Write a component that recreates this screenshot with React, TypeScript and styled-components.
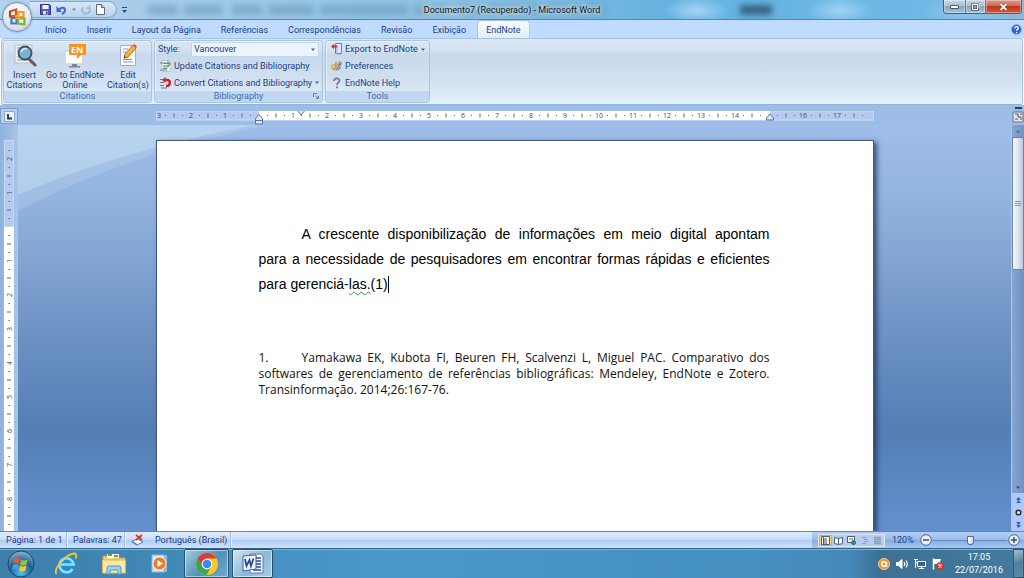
import React from "react";
import styled, { createGlobalStyle, css } from "styled-components";

const Global = createGlobalStyle`
  *, *::before, *::after { box-sizing: border-box; }
  body { margin: 0; font-family: Roboto, "Liberation Sans", sans-serif; font-size: 9px; line-height: 10px; color: #1c4184; }
  button, select, input { font: inherit; color: inherit; margin: 0; padding: 0; border: 0; background: none; }
  svg { display: block; flex: none; }
  h1, p { margin: 0; font: inherit; }
`;

const Window = styled.div`
  height: 100vh;
  display: flex;
  flex-direction: column;
  overflow: hidden;
`;

/* ---------- Title bar ---------- */

const TitleBar = styled.header`
  position: relative;
  flex: none;
  height: 20px;
  display: flex;
  align-items: flex-start;
  justify-content: space-between;
  border-bottom: 1px solid #5c86a6;
  background:
    radial-gradient(ellipse 34px 14px at 68% 55%, #a5d4f3, transparent),
    radial-gradient(ellipse 34px 14px at 82% 55%, #9fd2f3, transparent),
    radial-gradient(ellipse 40px 16px at 94% 60%, #8cc6ec, transparent),
    linear-gradient(90deg, #b5d2ee 0, #a3cbe9 18%, #8dc2e3 45%, #63b2df 66%, #6fb9e6 90%, #8fb9da 100%);
`;

const GhostTitle = styled.div`
  position: absolute;
  inset: 5px 0 4px 148px;
  display: flex;
  gap: 6px;
  filter: blur(3px);
`;

const GhostBlock = styled.span<{ $w: number; $dark?: boolean; $push?: number }>`
  width: ${(p) => p.$w}px;
  margin-left: ${(p) => p.$push ?? 0}px;
  background: ${(p) => (p.$dark ? "#2f5470" : "#6c97b8")};
  opacity: ${(p) => (p.$dark ? 0.85 : 0.6)};
`;

const QuickAccess = styled.div`
  position: relative;
  display: flex;
  align-items: center;
  height: 17px;
  width: 87px;
  margin: 1px 0 0 30px;
  padding-left: 10px;
  gap: 5px;
  border: 1px solid #86a6c9;
  border-left: 0;
  border-radius: 0 9px 9px 0;
  background: linear-gradient(#d9e8f8, #b9d2ee);
`;

const IconButton = styled.button`
  display: grid;
  place-items: center;
`;

const QuickMenu = styled(IconButton)`
  position: absolute;
  left: 92px;
  top: 5px;
`;

const WindowTitle = styled.h1`
  position: absolute;
  left: 50%;
  top: 5px;
  transform: translateX(-50%);
  white-space: nowrap;
  color: #101820;
  text-shadow: 0 0 5px #fff, 0 0 5px #d8ecfa;
`;

const WindowButtons = styled.div`
  position: relative;
  display: flex;
  height: 14px;
  margin-right: 2px;
  border: 1px solid #44627e;
  border-top: 0;
  border-radius: 0 0 4px 4px;
  overflow: hidden;
`;

const WindowButton = styled.button<{ $w: number; $close?: boolean }>`
  width: ${(p) => p.$w}px;
  display: grid;
  place-items: center;
  box-shadow: inset 0 0 0 1px rgba(255, 255, 255, 0.35);
  background: ${(p) =>
    p.$close
      ? "linear-gradient(#dd9a8c 0, #cf6a55 45%, #bd3621 50%, #d4583a 100%)"
      : "linear-gradient(#c3d8e8 0, #a9c2d6 45%, #87a5be 50%, #a6c6de 100%)"};
  & + & { border-left: 1px solid #5c7890; }
`;

const OfficeButton = styled.button`
  position: absolute;
  z-index: 2;
  left: 2px;
  top: 2px;
  width: 30px;
  height: 30px;
  border-radius: 50%;
  display: grid;
  place-items: center;
  border: 1px solid #7e94b0;
  background: radial-gradient(circle at 50% 30%, #fdfefe 0, #e3e9f1 55%, #b9c8da 100%);
  box-shadow: 0 0 2px #6684a8;
`;

/* ---------- Ribbon ---------- */

const TabStrip = styled.nav`
  flex: none;
  height: 18px;
  padding: 1px 2px 0 37px;
  display: flex;
  gap: 4px;
  background: #bfdbff;
`;

const Tab = styled.button<{ $active?: boolean }>`
  padding: 0 8px;
  border-radius: 3px 3px 0 0;
  white-space: nowrap;
  ${(p) =>
    p.$active &&
    css`
      position: relative;
      background: linear-gradient(#f7fbff, #e3edf8);
      box-shadow: 0 0 0 1px #9dbfe8;
      clip-path: inset(-1px -1px 0 -1px);
    `}
`;

const HelpButton = styled(IconButton)`
  margin-left: auto;
`;

const Ribbon = styled.section`
  flex: none;
  display: flex;
  gap: 2px;
  padding: 1px;
  height: 67px;
  margin: 0 1px;
  border: 1px solid #a5c3e8;
  border-bottom-color: #8eb4d8;
  border-radius: 3px;
  background: linear-gradient(#dbe7f5 0, #d4e1f0 18%, #c8d9ec 24%, #d2e1f1 65%, #e2f3fb 100%);
`;

const Group = styled.section<{ $w: number }>`
  width: ${(p) => p.$w}px;
  display: flex;
  flex-direction: column;
  border: 1px solid #a9c6e4;
  border-radius: 3px;
  box-shadow: inset 1px 1px 0 rgba(255, 255, 255, 0.45);
  overflow: hidden;
`;

const GroupBody = styled.div<{ $rows?: boolean }>`
  flex: 1;
  min-height: 0;
  display: flex;
  flex-direction: ${(p) => (p.$rows ? "column" : "row")};
  padding: ${(p) => (p.$rows ? "0 3px" : "2px 2px 0")};
`;

const GroupLabel = styled.footer`
  position: relative;
  flex: none;
  height: 11px;
  text-align: center;
  color: #3f6caf;
  background: #c1d8f0;
`;

const Launcher = styled(IconButton)`
  position: absolute;
  right: 3px;
  top: 2px;
`;

const LargeButton = styled.button<{ $w: number }>`
  width: ${(p) => p.$w}px;
  display: flex;
  flex-direction: column;
  align-items: center;
  gap: 2px;
  white-space: pre-line;
`;

const Row = styled.div`
  height: 17px;
  display: flex;
  align-items: center;
`;

const RowButton = styled.button`
  height: 17px;
  display: flex;
  align-items: center;
  gap: 3px;
  padding-left: 2px;
  white-space: nowrap;
`;

const StyleLabel = styled.label`
  width: 33px;
`;

const SelectBox = styled.div`
  flex: 1;
  height: 15px;
  display: flex;
  align-items: center;
  padding-right: 3px;
  border: 1px solid #c1d5ee;
  background: #ecf3fc;
`;

const StyleSelect = styled.select`
  flex: 1;
  height: 12px;
  padding-left: 2px;
  appearance: none;
`;

/* ---------- Workspace ---------- */

const Workspace = styled.main`
  flex: 1;
  min-height: 0;
  display: grid;
  grid-template-columns: 18px 1fr 13px;
  grid-template-rows: 20px 1fr;
  background: #9dbce6;
`;

const TabSelector = styled(IconButton)`
  margin: 3px 0 1px;
  border: 1px solid #7f9fd0;
  background: #b8cdee;
`;

const RulerBar = styled.div`
  display: flex;
  justify-content: center;
  padding-top: 6px;
  overflow: hidden;
`;

const SideRuler = styled.div`
  padding: 15px 0 0 4px;
  overflow: hidden;
  background: linear-gradient(90deg, #8fb2de, #a8c5ea);
`;

const Canvas = styled.div`
  position: relative;
  overflow: hidden;
  display: flex;
  justify-content: center;
  align-items: stretch;
  padding-top: 15px;
  background: linear-gradient(#9ebee9 0, #93b4df 18%, #7397c8 46%, #547eb3 75%, #6490cf 100%);
`;

const Swoosh = styled.svg`
  position: absolute;
  left: 0;
  top: 0;
`;

const Paper = styled.article`
  position: relative;
  width: 718px;
  padding: 81px 103px 0 102px;
  background: #fff;
  border: 1px solid #44597c;
  border-width: 1px 1px 0;
  box-shadow: 3px 2px 5px rgba(25, 45, 85, 0.75);
  color: #000;
`;

const BodyText = styled.p`
  font: 14px/25px "Liberation Sans", Arial, sans-serif;
`;

const Reference = styled.p`
  margin-top: 53px;
  font: 12px/16px "Open Sans", "Noto Sans", sans-serif;
  color: #111;
`;

const Line = styled.span<{ $indent?: boolean; $last?: boolean }>`
  display: block;
  white-space: nowrap;
  text-align: justify;
  text-align-last: ${(p) => (p.$last ? "left" : "justify")};
  padding-left: ${(p) => (p.$indent ? 43 : 0)}px;
`;

const NumberedLine = styled.span`
  display: flex;
  & > span:first-child { width: 43px; }
  & > span:last-child { flex: 1; padding: 0; }
`;

const Grammar = styled.span`
  text-decoration: underline wavy #2f9e44 1px;
  text-underline-offset: 2px;
  text-decoration-skip-ink: none;
`;

const Caret = styled.span`
  display: inline-block;
  width: 1px;
  height: 17px;
  vertical-align: -4px;
  background: #000;
`;

const ScrollBar = styled.div`
  display: flex;
  flex-direction: column;
  border-left: 1px solid #a9c6ee;
  background: linear-gradient(90deg, #86a5d2, #6f93c4);
`;

const ScrollButton = styled(IconButton)<{ $h: number; $light?: boolean }>`
  flex: none;
  height: ${(p) => p.$h}px;
  background: ${(p) => (p.$light ? "#aec9f6" : "transparent")};
`;

const Thumb = styled.div`
  height: 133px;
  flex: none;
  display: grid;
  place-items: center;
  border: 1px solid #6d84a8;
  border-radius: 2px;
  background: linear-gradient(90deg, #f4f8fd, #dfe8f3 45%, #b9c8dc);
`;

const Spacer = styled.div`
  flex: 1;
`;

/* ---------- Status bar ---------- */

const StatusBar = styled.footer`
  flex: none;
  height: 17px;
  display: flex;
  align-items: stretch;
  border-top: 1px solid #5d86bd;
  background: linear-gradient(#dfebfb 0, #cbdffa 45%, #b1cdf5 52%, #cfe2fc 100%);
`;

const StatusItem = styled.button<{ $w: number }>`
  width: ${(p) => p.$w}px;
  padding-left: 6px;
  text-align: left;
  white-space: nowrap;
  border-right: 1px solid #a3c0e8;
  box-shadow: 1px 0 0 #e6f0fd;
`;

const ProofButton = styled(IconButton)`
  padding: 0 5px 0 6px;
`;

const StatusTools = styled.div`
  margin-left: auto;
  display: flex;
  align-items: center;
  padding: 0 4px 0 6px;
  background: linear-gradient(#b5d0f5 0, #9cbdec 45%, #86ade4 52%, #a8c8f3 100%);
`;

const ViewButtons = styled.div`
  display: flex;
  height: 13px;
  border: 1px solid #dbe8fa;
  background: #b7cdec;
`;

const ViewButton = styled(IconButton)<{ $on?: boolean }>`
  width: 13px;
  ${(p) => p.$on && "background: #ffd88f; box-shadow: inset 0 0 0 1px #e8a33a;"}
`;

const ZoomValue = styled.button`
  width: 35px;
  padding-left: 7px;
  text-align: left;
`;

const ZoomSlider = styled.input`
  width: 76px;
  height: 14px;
  appearance: none;
  background: linear-gradient(#6a8fc5, #6a8fc5) center / 74px 1px no-repeat;
  &::-webkit-slider-thumb {
    appearance: none;
    width: 7px;
    height: 9px;
    border: 1px solid #4e6f9f;
    border-radius: 1px 1px 4px 4px;
    background: linear-gradient(90deg, #fff, #c9d8ec);
  }
`;

/* ---------- Taskbar ---------- */

const Taskbar = styled.footer`
  flex: none;
  height: 30px;
  display: flex;
  align-items: stretch;
  border-top: 1px solid #2f6388;
  box-shadow: inset 0 1px 0 #7fb4d6;
  background: linear-gradient(90deg, #3e7fac 0, #4189b7 18%, #468fc0 22%, #4b98cb 38%, #4690c2 72%, #4489b8 83%, #3c7094 86%, #447a9d 100%);
`;

const TaskButton = styled.button<{ $w: number; $open?: boolean; $front?: boolean }>`
  width: ${(p) => p.$w}px;
  display: grid;
  place-items: center;
  ${(p) =>
    p.$open &&
    css`
      margin-right: 3px;
      border: 1px solid #27506c;
      border-radius: 2px;
      box-shadow: inset 0 0 0 1px rgba(255, 255, 255, 0.5);
      background: ${p.$front
        ? "linear-gradient(135deg, #d3e5f1, #8ab9d8 55%, #a9cde4)"
        : "linear-gradient(135deg, #a8cbe1, #4f8fb9 55%, #74abcd)"};
    `}
`;

const Tray = styled.div`
  margin-left: auto;
  display: flex;
  align-items: center;
  gap: 6px;
`;

const Clock = styled.time`
  width: 52px;
  margin: 0 2px 0 3px;
  text-align: center;
  line-height: 13px;
  color: #fff;
`;

const ShowDesktop = styled.button`
  align-self: stretch;
  width: 11px;
  border: 1px solid #2d5671;
  background: linear-gradient(160deg, #a4bfd0, #4f7f9f 50%, #5e8cab);
`;

/* ---------- Icons ---------- */

const Arrow = ({ up, color = "#4a6797" }: { up?: boolean; color?: string }) => (
  <svg width="4" height="3" viewBox="0 0 4 3"><path d={up ? "M0 2.500h4L2 0z" : "M0 .500h4L2 3z"} fill={color} /></svg>
);

const OfficeLogo = () => (
  <svg width="20" height="20" viewBox="0 0 20 20" fill="none" strokeWidth="2.200">
    <path d="M3 4.500 9 2.500v6L3 9.500z" stroke="#e2501d" />
    <path d="M11 5h5.500v5H11z" stroke="#f09a1e" />
    <path d="M4.500 11h5v5.500h-5z" stroke="#3f77c7" />
    <path d="M11 11.500h6.500v6L11 16.500z" stroke="#7fb434" />
    <path d="M9 8.500h3v3H9z" stroke="#f4c12e" strokeWidth="1.200" />
    <path d="M3 4.500v5" stroke="#b93016" strokeWidth="1.500" />
  </svg>
);

const SaveIcon = () => (
  <svg width="11" height="11" viewBox="0 0 11 11">
    <path d="M.5.500h9l1 1v9H.500z" fill="#5a5ab8" stroke="#34348c" />
    <path d="M2.500 1h6v4h-6z" fill="#f2f5ff" /><path d="M3 7h5v3.500H3z" fill="#dfe4f6" /><path d="M6 7.500h1.500V10H6z" fill="#34348c" />
  </svg>
);

const UndoIcon = () => (
  <svg width="11" height="10" viewBox="0 0 11 10">
    <path d="M3 4.500C6 1.500 9 2.500 9 5c0 2-1.500 3.300-3 4" fill="none" stroke="#3c68c4" strokeWidth="2" />
    <path d="M.500 1v6h5.500z" fill="#3c68c4" />
  </svg>
);

const RedoIcon = () => (
  <svg width="10" height="10" viewBox="0 0 10 10" fill="none" stroke="#9fb2cd" strokeWidth="1.500">
    <path d="M2 2.500A3.800 3.800 0 1 0 8 2.500" /><path d="M5.500 3h3V.500" />
  </svg>
);

const NewIcon = () => (
  <svg width="9" height="11" viewBox="0 0 9 11"><path d="M.500.500h5l3 3v7h-8z" fill="#fff" stroke="#59677f" /><path d="M5.500.500v3h3" fill="#d6dfed" stroke="#59677f" /></svg>
);

const HelpIcon = () => (
  <svg width="11" height="11" viewBox="0 0 11 11">
    <circle cx="5.500" cy="5.500" r="5" fill="#2f62d0" stroke="#8fb0ea" />
    <path d="M3.700 4.400c0-2.300 3.700-2.300 3.700-.3 0 1.300-1.800 1.200-1.800 2.600M5.600 8v1.200" fill="none" stroke="#fff" strokeWidth="1.300" />
  </svg>
);

const InsertIcon = () => (
  <svg width="24" height="25" viewBox="0 0 24 25">
    <path d="M2 2h17v18H2z" fill="#eceff3" stroke="#b9c2cd" />
    <path d="M4 5h5M4 8h3M4 14h4M4 17h11" stroke="#8a96a6" />
    <path d="m0 17 6 4H1z" fill="#c4cad3" />
    <path d="m16 16 6 6" stroke="#665b58" strokeWidth="3" strokeLinecap="round" />
    <circle cx="12" cy="10" r="6.500" fill="#7db3d3" stroke="#3f5362" strokeWidth="1.800" />
    <path d="M8 9c1-3 4-4 6-3" fill="none" stroke="#d5edfa" strokeWidth="1.500" />
  </svg>
);

const OnlineIcon = () => (
  <svg width="24" height="25" viewBox="0 0 24 25">
    <path d="M2 8h18v13H2z" fill="#fff" stroke="#d2dae4" strokeWidth="2" />
    <path d="M9 21h5v2H9zM6 23h11v1.500H6z" fill="#7d8792" />
    <path d="M6 1h17v11h-5l-4 4v-4H6z" fill="#f7931e" />
    <text x="8" y="10" fontFamily="Open Sans" fontSize="9" fontWeight="700" fill="#fff">EN</text>
  </svg>
);

const EditIcon = () => (
  <svg width="20" height="25" viewBox="0 0 20 25">
    <path d="M2.500 2.500h15v20h-15z" fill="#fdfdff" stroke="#9fb0cc" />
    <path d="M5 6h5M5 9h3M5 19h10" stroke="#7e9ad0" /><path d="M5 17c3-2 5 1 9-1" fill="none" stroke="#6b78a8" />
    <path d="m6 15 1-4 8-9 3 3-8 9z" fill="#f6b33c" stroke="#b26a1c" />
    <path d="m15 2 3 3 1-1.500L16.500 1z" fill="#e0584c" /><path d="m6 15 .500-2 1.500 1.500z" fill="#333" />
  </svg>
);

const UpdateIcon = () => (
  <svg width="11" height="12" viewBox="0 0 11 12" fill="none">
    <path d="M2 .500h8v11H2z" fill="#f3f6f9" stroke="#bcc8d6" />
    <path d="M0 3h6M3 6h6M0 10h7" stroke="#6b7b8d" /><path d="M4 3.500h4V2l2 2-2 2V4.500M7 8H4M7 8.500H3" stroke="#3aa657" strokeWidth="1.200" />
  </svg>
);

const ConvertIcon = () => (
  <svg width="11" height="12" viewBox="0 0 11 12" fill="none">
    <path d="M0 2.500h5M0 5.500h4M0 8.500h4M1 11h6" stroke="#6b7b8d" />
    <path d="M4 3h3c4 0 4 6-1 6" stroke="#c9252c" strokeWidth="2.500" /><path d="M5.500 0v6L2 3z" fill="#c9252c" />
  </svg>
);

const ExportIcon = () => (
  <svg width="11" height="12" viewBox="0 0 11 12">
    <path d="M4.500.500h6v10h-6z" fill="#dfe8fb" stroke="#5f7ec0" /><path d="M6 2.500v8l3 1" fill="none" stroke="#8fa7dc" />
    <path d="M0 3.500 3 1v1.500h3v2H3V6z" fill="#cc2a36" />
  </svg>
);

const PreferencesIcon = () => (
  <svg width="11" height="12" viewBox="0 0 12 12" fill="none">
    <circle cx="3" cy="7" r="2" stroke="#e5a93c" strokeWidth="1.600" /><path d="M2 10.500 7.500 4M4.500 5 6 1.500" stroke="#e09a2a" strokeWidth="1.800" />
    <path d="m5 11 5-7M10 1 8.500 4l1.500 1 1.500-2.500M8 10.500 10.500 7" stroke="#7a828c" strokeWidth="1.500" />
  </svg>
);

const QuestionIcon = () => (
  <svg width="11" height="12" viewBox="0 0 11 12"><path d="M3 4C3 .500 8.500.500 8.500 3.500 8.500 5.500 6 5.500 6 8M6 9.300v2" fill="none" stroke="#76797f" strokeWidth="1.700" /></svg>
);

const LauncherIcon = () => (
  <svg width="6" height="6" viewBox="0 0 6 6" fill="none" stroke="#5d84bd"><path d="M.500 4V.500H4M2.500 2.500 5 5M5.500 3v2.500H3" /></svg>
);

const StartIcon = () => (
  <svg width="28" height="28" viewBox="0 0 28 28">
    <defs><radialGradient id="start" cx="50%" cy="85%" r="80%"><stop offset="0" stopColor="#4cc3f0" /><stop offset=".55" stopColor="#1d5f96" /><stop offset="1" stopColor="#7fa9c6" /></radialGradient></defs>
    <circle cx="14" cy="14" r="13" fill="url(#start)" stroke="#1d4767" />
    <path d="M7 9c2-1.500 4-1.500 6 0l-1 5c-2-1.500-4-1.500-6 0z" fill="#ea5b2c" />
    <path d="M14 9.500c2 1.200 4 1.200 6.500 0l-1 5c-2 1.200-4.500 1.200-6.500 0z" fill="#8cc63f" />
    <path d="M6 15c2-1.500 4-1.500 6 0l-1 5c-2-1.500-4-1.500-6 0z" fill="#3fa0e6" />
    <path d="M13 15.500c2 1.200 4 1.200 6.500 0l-1 5c-2 1.200-4.500 1.200-6.500 0z" fill="#fcc62b" />
  </svg>
);

const ExplorerE = () => (
  <svg width="24" height="24" viewBox="0 0 24 24" fill="none">
    <path d="M19 16.500A7 7 0 1 1 19.500 12.500H8" stroke="#1f93da" strokeWidth="5" />
    <path d="M18.500 17A7 7 0 1 1 19.500 12.500H7" stroke="#8fdcfb" strokeWidth="2.500" />
    <path d="M2.500 22C-1 17 12 2 20 1.500c3 0 2.500 3 1.500 5" stroke="#f6c62f" strokeWidth="1.800" />
  </svg>
);

const FolderIcon = () => (
  <svg width="26" height="24" viewBox="0 0 26 24">
    <path d="M2 4h9l2 2h11v15H2z" fill="#efd27a" stroke="#c9a345" />
    <path d="M6 2h12v4H6z" fill="#fff" /><path d="M7 3h4M13 4h4" stroke="#56a84a" strokeWidth="2" />
    <path d="M1.500 8h23v13h-23z" fill="#fae9a5" stroke="#d8b557" />
    <path d="M6 22v-6q0-2 2-2h10q2 0 2 2v6h-3v-4H9v4z" fill="#9fd2f0" stroke="#5998c4" />
  </svg>
);

const PlayerIcon = () => (
  <svg width="22" height="22" viewBox="0 0 22 22">
    <path d="M7 2h11v17H7z" fill="#9ecbe6" opacity=".8" /><path d="M3 2h12v17H3z" fill="#cfe5f3" stroke="#8fbddc" />
    <circle cx="10.500" cy="10.500" r="6.500" fill="#f07a22" stroke="#fff" strokeWidth=".8" /><path d="M8.500 7v7l5.500-3.500z" fill="#fff" />
  </svg>
);

const ChromeIcon = () => (
  <svg width="24" height="24" viewBox="0 0 24 24">
    <circle cx="12" cy="12" r="11" fill="#fbc91f" />
    <path d="M2.500 6.500A11 11 0 0 1 21.500 6.500H12L7.200 14.700z" fill="#e33b2e" />
    <path d="M2.500 6.500A11 11 0 0 0 11.500 23L16.500 14.500 12 17 7.500 14.700z" fill="#36a852" />
    <circle cx="12" cy="12" r="5.400" fill="#fff" /><circle cx="12" cy="12" r="4.300" fill="#4285f4" />
  </svg>
);

const WordIcon = () => (
  <svg width="24" height="24" viewBox="0 0 24 24">
    <path d="M9 2h11l2 2v17H9z" fill="#f7faff" stroke="#5c79ab" />
    <path d="M15 6h5M15 9h5M15 12h5M12 15h8M12 18h8" stroke="#2c4f95" strokeWidth="1.400" />
    <path d="m2 4 13-1v14L2 19z" fill="#eef4fd" stroke="#3f62a5" />
    <path d="m4 7 1.500 7L8.500 8l1.500 6 2.500-7.500" fill="none" stroke="#1f4596" strokeWidth="1.700" />
  </svg>
);

const ProofIcon = () => (
  <svg width="13" height="12" viewBox="0 0 13 12">
    <path d="m1 7 6-2 5 3-6 3z" fill="#fff" stroke="#5a79b5" /><path d="m1 7 5 3v1.500L1 8.500z" fill="#5a79b5" />
    <path d="m5 1 6 5M11 1 5 6" stroke="#d6382b" strokeWidth="1.700" />
  </svg>
);

const ViewIcon = ({ kind }: { kind: number }) => {
  const faded = kind > 2;
  const ink = faded ? "#8b9db8" : "#4d6079";
  return (
    <svg width="9" height="9" viewBox="0 0 9 9" fill="none" stroke={ink}>
      {kind === 0 && <path d="M.500.500h8v8h-8zM3 3h3M3 5h3M3 7h3M2.500 1v7" fill="#f7f3e6" />}
      {kind === 1 && <path d="M.500 1.500 4.500 2.500l4-1v6l-4 1-4-1zM4.500 2.500v6" fill="#fff" />}
      {kind === 2 && <><path d="M.500.500h7v6h-7zM2 3h4" fill="#fff" /><circle cx="6.500" cy="6.500" r="2" fill="#3f8f77" stroke="#28637a" /></>}
      {kind === 3 && <path d="M2 1.500h4M4 3.500h4M4 5.500h4M2 7.500h4" />}
      {kind === 4 && <path d="M1 1.500h7M1 3.500h7M1 5.500h7M1 7.500h7" strokeWidth="1.500" />}
    </svg>
  );
};

const ZoomGlyph = ({ plus }: { plus?: boolean }) => (
  <svg width="12" height="12" viewBox="0 0 12 12" fill="none">
    <circle cx="6" cy="6" r="5.300" fill="#e6effb" stroke="#50668c" /><path d={plus ? "M3 6h6M6 3v6" : "M3 6h6"} stroke="#3c4f70" strokeWidth="1.500" />
  </svg>
);

/* ---------- Rulers ---------- */

const UNIT = 34;

const HorizontalRuler = () => {
  const zero = 103;
  const steps = Array.from({ length: 84 }, (_, i) => i - 12);
  return (
    <svg width="718" height="14" viewBox="0 0 718 14" fontFamily="Open Sans, sans-serif" fontSize="7" textAnchor="middle" fill="#3b4a66">
      <path d="M0 0h718v9H0z" fill="#b5caee" stroke="#cfdff7" /><path d="M103 0h511v9H103z" fill="#fff" />
      {steps.map((s) => {
        const x = zero + (s * UNIT) / 4;
        if (x > 712 || x < 0 || s === 0 || s === 60) return null;
        if (s % 4 === 0) return <text key={s} x={Math.max(x, 3)} y="7">{Math.abs(s / 4)}</text>;
        return <path key={s} d={s % 2 === 0 ? `M${x} 2.500v4` : `M${x} 4v1`} stroke="#5b6a86" strokeWidth="1" />;
      })}
      <path d="M99.500 13V7.500l3.500-4 3.500 4V13zM99.500 9.500h7" fill="#dbe6f6" stroke="#5f7396" />
      <path d="M610.500 9V7l3.500-4 3.500 4v2z" fill="#dbe6f6" stroke="#5f7396" />
      <path d="M141.500-2.500h7V0L145 4l-3.500-4z" fill="#dbe6f6" stroke="#5f7396" />
    </svg>
  );
};

/* Fills the space between the ribbon (140px above it) and the two bottom bars (47px). */
const VerticalRuler = () => {
  const zero = 87;
  const length = Math.max(window.innerHeight - 187, zero);
  const count = Math.floor(((length - zero - 4) * 4) / UNIT) + 10;
  const steps = Array.from({ length: count }, (_, i) => i - 9);
  return (
    <svg width="10" height={length} fontFamily="Open Sans, sans-serif" fontSize="7" textAnchor="middle" fill="#3b4a66">
      <path d="M0 0h10v87H0z" fill="#b5caee" stroke="#d6e3f8" /><path d={`M0 87h10V${length}H0z`} fill="#fff" />
      {steps.map((s) => {
        const y = zero + (s * UNIT) / 4;
        if (s === 0) return null;
        if (s % 4 === 0) return <text key={s} transform={`translate(7.500 ${y}) rotate(-90)`}>{Math.abs(s / 4)}</text>;
        return <path key={s} d={s % 2 === 0 ? `M3 ${y}h4` : `M4.500 ${y}h1.500`} stroke="#5b6a86" strokeWidth="1" />;
      })}
    </svg>
  );
};

const tabs = ["Início", "Inserir", "Layout da Página", "Referências", "Correspondências", "Revisão", "Exibição", "EndNote"];
const viewNames = ["Layout de Impressão", "Leitura em Tela Inteira", "Layout da Web", "Estrutura de Tópicos", "Rascunho"];

export default function App() {
  return (
    <Window>
      <Global />
      <TitleBar>
        <GhostTitle aria-hidden="true">
          <GhostBlock $w={30} /><GhostBlock $w={38} /><GhostBlock $w={30} $push={4} /><GhostBlock $w={46} />
          <GhostBlock $w={88} /><GhostBlock $w={36} /><GhostBlock $w={150} />
          <GhostBlock $w={32} $dark $push={128} />
        </GhostTitle>
        <OfficeButton aria-label="Botão Office"><OfficeLogo /></OfficeButton>
        <QuickAccess>
          <IconButton aria-label="Salvar"><SaveIcon /></IconButton>
          <IconButton aria-label="Desfazer"><UndoIcon /></IconButton>
          <IconButton aria-label="Opções de desfazer"><Arrow color="#6f86aa" /></IconButton>
          <IconButton aria-label="Repetir"><RedoIcon /></IconButton>
          <IconButton aria-label="Novo"><NewIcon /></IconButton>
          <QuickMenu aria-label="Personalizar barra">
            <svg width="5" height="6" viewBox="0 0 5 6"><path d="M0 0h5v1H0zM0 3h5L2.500 6z" fill="#2c4a7c" /></svg>
          </QuickMenu>
        </QuickAccess>
        <WindowTitle>Documento7 (Recuperado) - Microsoft Word</WindowTitle>
        <WindowButtons>
          <WindowButton $w={21} aria-label="Minimizar">
            <svg width="9" height="4"><path d="M.500.500h8v3h-8z" fill="#fff" stroke="#4e5d6b" /></svg>
          </WindowButton>
          <WindowButton $w={20} aria-label="Restaurar">
            <svg width="9" height="9" fill="none"><path d="M3 .500h5.500V6M1.500 2.500h5v5h-5z" stroke="#4e5d6b" strokeWidth="2.500" /><path d="M3 .800h5.200V6M1.500 2.500h5v5h-5z" stroke="#fff" /></svg>
          </WindowButton>
          <WindowButton $w={36} $close aria-label="Fechar">
            <svg width="9" height="8" fill="none"><path d="m1.500 1 6 6M7.500 1l-6 6" stroke="#6e3a33" strokeWidth="3" /><path d="m1.500 1 6 6M7.500 1l-6 6" stroke="#fff" strokeWidth="1.800" /></svg>
          </WindowButton>
        </WindowButtons>
      </TitleBar>

      <TabStrip>
        {tabs.map((t) => <Tab key={t} $active={t === "EndNote"}>{t}</Tab>)}
        <HelpButton aria-label="Ajuda"><HelpIcon /></HelpButton>
      </TabStrip>

      <Ribbon>
        <Group $w={149}>
          <GroupBody>
            <LargeButton $w={37}><InsertIcon />{"Insert\nCitations"}</LargeButton>
            <LargeButton $w={64}><OnlineIcon />{"Go to EndNote\nOnline"}</LargeButton>
            <LargeButton $w={42}><EditIcon />{"Edit\nCitation(s)"}</LargeButton>
          </GroupBody>
          <GroupLabel>Citations</GroupLabel>
        </Group>
        <Group $w={169}>
          <GroupBody $rows>
            <Row>
              <StyleLabel htmlFor="style">Style:</StyleLabel>
              <SelectBox>
                <StyleSelect id="style" defaultValue="Vancouver"><option>Vancouver</option></StyleSelect>
                <Arrow />
              </SelectBox>
            </Row>
            <RowButton><UpdateIcon />Update Citations and Bibliography</RowButton>
            <RowButton><ConvertIcon />Convert Citations and Bibliography<Arrow /></RowButton>
          </GroupBody>
          <GroupLabel>Bibliography<Launcher aria-label="Abrir opções"><LauncherIcon /></Launcher></GroupLabel>
        </Group>
        <Group $w={105}>
          <GroupBody $rows>
            <RowButton><ExportIcon />Export to EndNote<Arrow /></RowButton>
            <RowButton><PreferencesIcon />Preferences</RowButton>
            <RowButton><QuestionIcon />EndNote Help</RowButton>
          </GroupBody>
          <GroupLabel>Tools</GroupLabel>
        </Group>
      </Ribbon>

      <Workspace>
        <TabSelector aria-label="Tipo de tabulação">
          <svg width="11" height="11" viewBox="0 0 11 11"><path d="M.500.500h10v10H.500z" fill="#e9f1fc" stroke="#8ea9d4" /><path d="M4 3v4.500h4" fill="none" stroke="#22314f" strokeWidth="1.800" /></svg>
        </TabSelector>
        <RulerBar><HorizontalRuler /></RulerBar>
        <ScrollButton $h={20} aria-label="Régua">
          <svg width="12" height="18" viewBox="0 0 12 18"><path d="M3 1h7v2H3z" fill="#22407a" /><path d="M1 6h10v10H1z" fill="#dfe6f0" stroke="#66707f" /><path d="M3 8h3v3h3v3M8 8h2M3 13h3" fill="none" stroke="#4e5664" /></svg>
        </ScrollButton>
        <SideRuler><VerticalRuler /></SideRuler>
        <Canvas>
          <Swoosh width="260" height="90" viewBox="0 0 260 90">
            <path d="M0 0h250Q110 28 0 86z" fill="#fff" opacity=".12" />
            <path d="M0 0h236Q100 26 0 70z" fill="#d4ecfa" opacity=".36" />
          </Swoosh>
          <Paper>
            <BodyText>
              <Line $indent>A crescente disponibilização de informações em meio digital apontam</Line>
              <Line>para a necessidade de pesquisadores em encontrar formas rápidas e eficientes</Line>
              <Line $last>para gerenciá-<Grammar>las.</Grammar>(1)<Caret /></Line>
            </BodyText>
            <Reference>
              <NumberedLine><span>1.</span><Line>Yamakawa EK, Kubota FI, Beuren FH, Scalvenzi L, Miguel PAC. Comparativo dos</Line></NumberedLine>
              <Line>softwares de gerenciamento de referências bibliográficas: Mendeley, EndNote e Zotero.</Line>
              <Line $last>Transinformação. 2014;26:167-76.</Line>
            </Reference>
          </Paper>
        </Canvas>
        <ScrollBar>
          <ScrollButton $h={12} aria-label="Rolar para cima"><Arrow up /></ScrollButton>
          <Thumb><svg width="6" height="6"><path d="M0 .500h6M0 2.500h6M0 4.500h6" stroke="#8d99ab" /></svg></Thumb>
          <Spacer />
          <ScrollButton $h={11} aria-label="Rolar para baixo"><Arrow color="#2c4a7c" /></ScrollButton>
          <ScrollButton $h={13} $light aria-label="Página anterior"><svg width="5" height="6"><path d="M0 3h5L2.500 0zM0 6h5L2.500 3z" fill="#2f5fd0" /></svg></ScrollButton>
          <ScrollButton $h={13} $light aria-label="Selecionar objeto"><svg width="7" height="7"><circle cx="3.500" cy="3.500" r="2.300" fill="#e8eefb" stroke="#2b2f3c" strokeWidth="1.500" /></svg></ScrollButton>
          <ScrollButton $h={12} $light aria-label="Próxima página"><svg width="5" height="6"><path d="M0 0h5L2.500 3zM0 3h5L2.500 6z" fill="#2f5fd0" /></svg></ScrollButton>
        </ScrollBar>
      </Workspace>

      <StatusBar>
        <StatusItem $w={67}>Página: 1 de 1</StatusItem>
        <StatusItem $w={58}>Palavras: 47</StatusItem>
        <ProofButton aria-label="Revisão ortográfica"><ProofIcon /></ProofButton>
        <StatusItem $w={82}>Português (Brasil)</StatusItem>
        <StatusTools>
          <ViewButtons>
            {viewNames.map((name, i) => <ViewButton key={name} $on={i === 0} aria-label={name}><ViewIcon kind={i} /></ViewButton>)}
          </ViewButtons>
          <ZoomValue>120%</ZoomValue>
          <IconButton aria-label="Reduzir zoom"><ZoomGlyph /></IconButton>
          <ZoomSlider type="range" aria-label="Zoom" min={0} max={100} defaultValue={50} />
          <IconButton aria-label="Ampliar zoom"><ZoomGlyph plus /></IconButton>
        </StatusTools>
      </StatusBar>

      <Taskbar>
        <TaskButton $w={41} aria-label="Iniciar"><StartIcon /></TaskButton>
        <TaskButton $w={50} aria-label="Internet Explorer"><ExplorerE /></TaskButton>
        <TaskButton $w={45} aria-label="Explorador de Arquivos"><FolderIcon /></TaskButton>
        <TaskButton $w={48} aria-label="Media Player"><PlayerIcon /></TaskButton>
        <TaskButton $w={45} $open aria-label="Chrome"><ChromeIcon /></TaskButton>
        <TaskButton $w={41} $open $front aria-label="Word"><WordIcon /></TaskButton>
        <Tray>
          <IconButton aria-label="Antivírus">
            <svg width="12" height="12" viewBox="0 0 12 12"><circle cx="6" cy="6" r="5.500" fill="#f58a1f" stroke="#fbd08c" /><circle cx="6" cy="6" r="2.300" fill="none" stroke="#fff" strokeWidth="1.700" /><path d="M8.500 4v5" stroke="#fff" strokeWidth="1.500" /></svg>
          </IconButton>
          <IconButton aria-label="Volume">
            <svg width="12" height="12" viewBox="0 0 12 12" fill="none" stroke="#fff"><path d="M.500 4.500h2L6 1.500v9l-3.500-3h-2z" fill="#fff" /><path d="M8 4q1.500 2 0 4M10 2.500q2.500 3.500 0 7" strokeWidth="1.200" /></svg>
          </IconButton>
          <IconButton aria-label="Rede">
            <svg width="12" height="12" viewBox="0 0 12 12" fill="none" stroke="#fff"><path d="M3.500 3.500h8v5h-8z" fill="#39617f" /><path d="M5 10.500h5M7.500 8.500v2M1.500 1v9M0 1.500h4M1 4.500h2" /></svg>
          </IconButton>
          <IconButton aria-label="Central de Ações">
            <svg width="12" height="12" viewBox="0 0 12 12" fill="none"><path d="M1.500.500v11" stroke="#fff" strokeWidth="1.500" /><path d="M2 1h7l-1 2.500L9 6H2z" fill="#fff" /><circle cx="8" cy="8" r="3.700" fill="#d8322b" /><path d="m6.500 6.500 3 3m0-3-3 3" stroke="#fff" strokeWidth="1.200" /></svg>
          </IconButton>
          <Clock>17:05<br />22/07/2016</Clock>
          <ShowDesktop aria-label="Mostrar área de trabalho" />
        </Tray>
      </Taskbar>
    </Window>
  );
}
